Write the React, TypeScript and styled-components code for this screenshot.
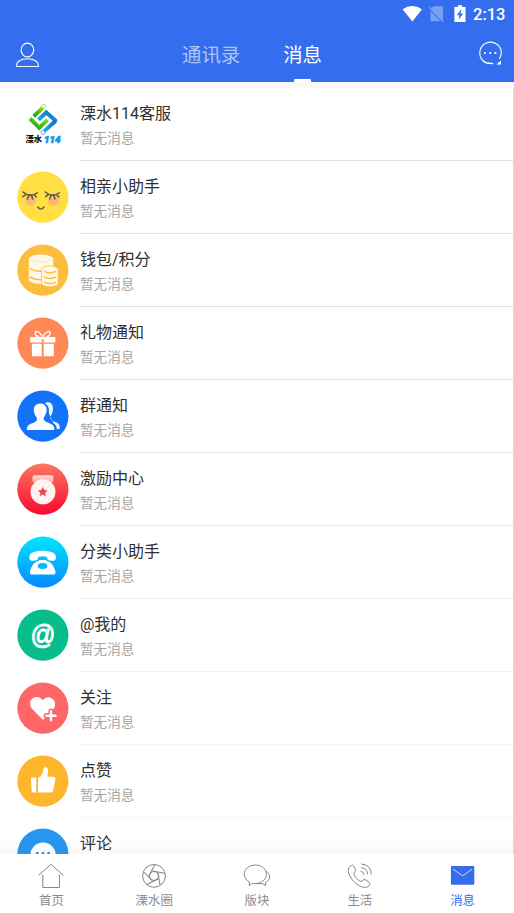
import React from 'react';
import styled, { createGlobalStyle } from 'styled-components';

const GlobalStyle = createGlobalStyle`
  * { box-sizing: border-box; }
  body {
    margin: 0;
    background: #fff;
    font-family: Roboto, "Noto Sans CJK SC", sans-serif;
  }
`;

const Screen = styled.div`
  display: flex;
  flex-direction: column;
  width: 514px;
  height: 913px;
  overflow: hidden;
  background: #fff;
`;

const Header = styled.header`
  flex: none;
  height: 82px;
  background: #346eee;
  color: #fff;
`;

const StatusBar = styled.div`
  display: flex;
  justify-content: flex-end;
  height: 28px;
  padding-right: 9px;
`;

const StatusIcons = styled.svg`
  width: 70px;
  height: 28px;
`;

const Clock = styled.span`
  width: 35px;
  padding-left: 3px;
  font-size: 16.5px;
  font-weight: 500;
  line-height: 29px;
  white-space: nowrap;
`;

const TitleBar = styled.div`
  display: grid;
  grid-template-columns: 168px 1fr 28px;
  height: 54px;
  padding: 0 9px 0 14px;
`;

const HeaderIcon = styled.svg`
  width: 28px;
  height: 54px;
  fill: none;
  stroke: #fff;
  stroke-width: 1.1;
`;

const Tabs = styled.nav`
  display: flex;
  gap: 43px;
`;

const Tab = styled.div<{ $active?: boolean }>`
  display: flex;
  flex-direction: column;
  align-items: center;
  height: 54px;
  font-size: 19.4px;
  line-height: 51px;
  padding-top: 2px;
  color: ${(p) => (p.$active ? '#fff' : 'rgba(255, 255, 255, 0.6)')};

  &::after {
    content: '';
    width: 17px;
    height: 3px;
    margin-top: -2px;
    flex: none;
    border-radius: 1px 1px 0 0;
    background: ${(p) => (p.$active ? '#fff' : 'transparent')};
  }
`;

const Strip = styled.div`
  flex: none;
  height: 6px;
  background: #f8f8f8;
`;

const List = styled.main`
  position: relative;
  flex: 1;
  min-height: 0;
  overflow: hidden;
  border-right: 1px solid #d9d9d9;
`;

const BottomShade = styled.div`
  position: absolute;
  inset: auto 0 0 0;
  height: 18px;
  background: linear-gradient(rgba(0, 0, 0, 0), rgba(0, 0, 0, 0.025));
`;

const Row = styled.div`
  display: flex;
  height: 73.06px;
  padding-left: 17px;
`;

const Avatar = styled.svg`
  flex: none;
  width: 52px;
  height: 52px;
  margin: 10px 11px 0 0;
`;

const RowBody = styled.div<{ $line: string }>`
  flex: 1;
  padding-top: 14px;
  border-bottom: 1px solid ${(p) => p.$line};
`;

const RowTitle = styled.div`
  font-size: 16px;
  line-height: 24px;
  color: #303030;
`;

const RowNote = styled.div`
  margin-top: 2px;
  font-size: 13.6px;
  line-height: 20px;
  color: #a6a6a6;
`;

const BottomNav = styled.nav`
  flex: none;
  display: grid;
  grid-template-columns: repeat(5, 1fr);
  height: 59px;
  background: #fff;
`;

const NavItem = styled.div<{ $active?: boolean }>`
  display: flex;
  flex-direction: column;
  align-items: center;
  padding-top: 8px;
  font-size: 12.4px;
  line-height: 18px;
  color: ${(p) => (p.$active ? '#346eee' : '#8c8c8c')};
`;

const NavIcon = styled.svg`
  width: 28px;
  height: 28px;
  margin-bottom: 2px;
  fill: none;
  stroke: #868686;
  stroke-width: 1;
`;

const Disc = ({ fill }: { fill: string }) => <circle cx="25.9" cy="26.2" r="25.6" fill={fill} />;

const LogoArt = () => (
  <>
    <defs>
      <linearGradient id="leaf" x1="0" y1="1" x2="1" y2="0">
        <stop offset="0" stopColor="#12a51c" />
        <stop offset="1" stopColor="#8ddc12" />
      </linearGradient>
      <linearGradient id="water" x1="0" y1="1" x2="1" y2="0">
        <stop offset="0" stopColor="#12b4f4" />
        <stop offset="1" stopColor="#1467c8" />
      </linearGradient>
    </defs>
    <g fill="none" strokeWidth="3.9">
      <path d="M16.8 18.3 26 9.3" stroke="url(#leaf)" />
      <path d="M13 20.5 22.3 29.7 30.6 21.8" stroke="url(#leaf)" />
      <path d="M21.5 21.8 29.2 14.5 39.5 23.5" stroke="url(#water)" />
      <path d="M38.8 22.8 27 33.4" stroke="url(#water)" />
    </g>
    <circle cx="26.7" cy="8.4" r="2" fill="#fff" stroke="#9cdd45" strokeWidth=".9" />
    <circle cx="26" cy="34.4" r="1.9" fill="#fff" stroke="#27b7f5" strokeWidth=".9" />
    <text x="8.4" y="44.4" fontSize="8.4" fontWeight="900" fill="#111">溧水</text>
    <text x="27" y="44.8" fontSize="9.8" fontWeight="900" fontStyle="italic" fill="#1496e4" stroke="#1496e4" strokeWidth=".7" textLength="16.4" lengthAdjust="spacingAndGlyphs">114</text>
  </>
);

const FaceArt = () => (
  <>
    <Disc fill="#ffdf42" />
    <circle cx="13.4" cy="29.5" r="5.3" fill="#ffb86b" />
    <circle cx="36.6" cy="29.5" r="5.3" fill="#ffb86b" />
    <g fill="none" stroke="#5c5550" strokeWidth="1.5" strokeLinecap="round">
      <path d="M6 21Q12.5 26.8 20.3 21.8M5.8 25.6 8.8 23.6M10.4 28 11.7 24.8M15.6 28 14.8 24.8M19.2 26 17 23.6" />
      <path d="M28.2 21Q34.7 26.8 42.3 21.8M28.7 25.6 31 23.6M32.7 28 33.8 24.8M37.8 28 37 24.8M42 26 39.5 23.6" />
      <path d="M20.8 36Q23.8 40.2 27 36" strokeWidth="1.3" />
    </g>
  </>
);

const CoinsArt = () => (
  <>
    <Disc fill="#fcbc3c" />
    <path d="M11.8 15.5C11.8 8.8 36.2 8.8 36.2 15.5V35C36.2 41.6 11.8 41.6 11.8 35Z" fill="#fff8e8" />
    <g fill="none" stroke="#fcbc3c" strokeWidth="1.5">
      <path d="M13.5 15.8Q24 20.2 34.5 15.8" strokeWidth=".7" opacity=".4" />
      <path d="M12.8 24Q17 27.6 25 27.2M12.8 32.7Q17 36 25 35.8" />
    </g>
    <path d="M24.5 25.7C24.5 20.7 41.2 20.7 41.2 25.7V39C41.2 44 24.5 44 24.5 39Z" fill="#fff8e8" stroke="#fcbc3c" strokeWidth=".8" />
    <path d="M27 27.4Q33 30.4 39 27.4M26.8 32.9Q33 36 39.2 32.9M26.8 38.2Q33 41 39.2 38.2" fill="none" stroke="#fcbc3c" strokeWidth="1.4" />
  </>
);

const GiftArt = () => (
  <>
    <Disc fill="#ff8956" />
    <g fill="none" stroke="#fff" strokeWidth="1.4">
      <path d="M25.6 20C22 13.4 17.4 13.2 18.4 17.2Q19 19.3 22 19.8" />
      <path d="M25.8 20C29.4 13.4 34 13.2 33 17.2Q32.4 19.3 29.4 19.8" />
    </g>
    <path d="M13.2 20H38.3V25.4H13.2ZM14.9 26.7H24.8V39.3H14.9ZM26.7 26.7H36.8V39.3H26.7Z" fill="#fff" />
    <path d="M24.8 22.3H26.7V25.6H24.8Z" fill="#ff8956" />
  </>
);

const GroupArt = () => (
  <>
    <Disc fill="#1372fa" />
    <path d="M27.5 13.5C31 11 35.8 12.7 36 18.2C36.2 21.8 35 24 33.8 26C32.5 29.2 35 30.8 39 32.2C42.3 33.3 43 35.5 42.8 39H39" fill="#fff" opacity=".92" />
    <path d="M23.2 12.5C28.9 12.5 32.2 16 32 20.4C31.9 23.6 30.7 25.4 29.6 27.4C28.6 29.6 30.7 30.5 34 31.9C38.6 33.7 39.9 36 39.9 41H30" fill="#1372fa" />
    <path d="M23.4 13.6C27.6 13.6 29.8 16.6 29.6 20.3C29.5 23.2 28.3 25 27 27.2C25.7 30.4 28.5 31.5 32 33C36.2 34.8 37.5 36.3 37.4 40H10C9.7 36.3 11.3 34.7 15.2 33.2C19 31.7 21 30.5 19.5 27.2C17.8 25 16.9 23 16.8 20.2C16.6 16.6 19 13.6 23.4 13.6Z" fill="#fff" />
  </>
);

const MedalArt = () => (
  <>
    <defs>
      <linearGradient id="medalBg" x1="0" y1="0" x2="0" y2="1">
        <stop offset="0" stopColor="#fd7662" />
        <stop offset="1" stopColor="#fa0830" />
      </linearGradient>
      <linearGradient id="ribbon" x1="0" y1="0" x2="0" y2="1">
        <stop offset="0" stopColor="#ffe2dc" />
        <stop offset="1" stopColor="#ff9f93" />
      </linearGradient>
    </defs>
    <Disc fill="url(#medalBg)" />
    <rect x="15.4" y="12.2" width="21" height="7.5" rx="2" fill="url(#ribbon)" />
    <circle cx="26" cy="28.8" r="12.5" fill="#fff3f1" />
    <path d="M25.8 24.4 27.1 27.3 30.2 27.6 27.9 29.7 28.5 32.8 25.8 31.2 23.1 32.8 23.7 29.7 21.4 27.6 24.5 27.3Z" fill="#e9444c" stroke="#e9444c" strokeWidth=".5" strokeLinejoin="round" />
  </>
);

const PhoneArt = () => (
  <>
    <defs>
      <linearGradient id="phoneBg" x1="0" y1="0" x2="0" y2="1">
        <stop offset="0" stopColor="#00e6ff" />
        <stop offset="1" stopColor="#0788ff" />
      </linearGradient>
    </defs>
    <Disc fill="url(#phoneBg)" />
    <path d="M12.4 22.5C11 16.8 18 14.8 25.6 14.8S40 16.8 38.8 22.5C38.5 24.6 37 24.9 34.5 24.7C30.8 24.4 30.2 23.8 30.2 21.8Q30.2 20.2 25.6 20.2T21 21.8C21 23.8 20.3 24.4 16.8 24.7C14 24.9 12.7 24.6 12.4 22.5Z" fill="#fff" />
    <path d="M20.8 25.2Q22 25 22.3 23.9H29Q29.4 25 30.6 25.2C34 26 37.3 30.5 38.4 35.5C38.8 37.7 38 38.6 36 38.6H15.2C13.2 38.6 12.5 37.7 13 35.5C14 30.5 17.4 26 20.8 25.2Z" fill="#fff" />
    <ellipse cx="25.6" cy="30" rx="4.8" ry="3" fill="#04b5ff" />
  </>
);

const AtArt = () => (
  <>
    <Disc fill="#08bd8c" />
    <text
      textAnchor="middle"
      transform="translate(25.9 34.8) scale(1 1.14)"
      fontFamily="Liberation Sans"
      fontSize="24.5"
      fill="#fff"
      stroke="#fff"
      strokeWidth=".9"
    >
      @
    </text>
  </>
);

const FollowArt = () => (
  <>
    <Disc fill="#ff6668" />
    <path d="M25.7 18.2C29 13.8 34 14.7 36.3 17.5C39 21 38.5 24.5 35.8 28L26 38L16.2 28C12.5 24.3 12.2 20 14.8 17.2C17.8 14 22.7 14.3 25.7 18.2Z" fill="#fff" />
    <path d="M34 29V38.4M29.2 33.7H38.8" stroke="#ff6668" strokeWidth="5.2" strokeLinecap="round" />
    <path d="M34 29.2V38.3M29.5 33.7H38.5" stroke="#fff" strokeWidth="2.4" strokeLinecap="round" />
  </>
);

const LikeArt = () => (
  <>
    <Disc fill="#ffb62f" />
    <path d="M14 23.3Q14 22.5 14.8 22.5H19.2V37.4H15.4Q14.8 37.4 14.7 36.7ZM21 23C24.3 21.5 26 18.5 26.3 14.5C26.5 11.5 30.7 11.3 31 15.5Q31.2 18.5 30.2 21.7H36.3C38.1 21.7 38.6 23 38.3 24.8L36.3 35.2C36 36.8 35 37.4 33.5 37.4H21Z" fill="#fff" />
  </>
);

const CommentArt = () => (
  <>
    <Disc fill="#2896ee" />
    <circle cx="26" cy="27.3" r="12.8" fill="#fff" />
    <g fill="#2896ee">
      <circle cx="20.3" cy="25.2" r="1.5" />
      <circle cx="26" cy="25.2" r="1.5" />
      <circle cx="31.7" cy="25.2" r="1.5" />
    </g>
  </>
);

const rows = [
  { title: '溧水114客服', Art: LogoArt, line: '#dfdfdf' },
  { title: '相亲小助手', Art: FaceArt, line: '#e0e0e0' },
  { title: '钱包/积分', Art: CoinsArt, line: '#e2e2e2' },
  { title: '礼物通知', Art: GiftArt, line: '#e4e4e4' },
  { title: '群通知', Art: GroupArt, line: '#e7e7e7' },
  { title: '激励中心', Art: MedalArt, line: '#ebebeb' },
  { title: '分类小助手', Art: PhoneArt, line: '#eeeeee' },
  { title: '@我的', Art: AtArt, line: '#f1f1f1' },
  { title: '关注', Art: FollowArt, line: '#f4f4f4' },
  { title: '点赞', Art: LikeArt, line: '#f7f7f7' },
];

const bladeAngles = [10, 82, 154, 226, 298];

const navItems = [
  {
    label: '首页',
    icon: <path d="M1.4 13.4 14 2.4 26.6 13.4M5.8 12.5V25.5H22.4V12.5" />,
  },
  {
    label: '溧水圈',
    icon: (
      <>
        <circle cx="14" cy="13.9" r="11.4" />
        <circle cx="14" cy="13.9" r="4.4" />
        {bladeAngles.map((a) => (
          <path key={a} d="M11.5 9.3H24.2" transform={`rotate(${a} 14 13.9)`} />
        ))}
      </>
    ),
  },
  {
    label: '版块',
    icon: (
      <>
        <path d="M12.3 3C18.5 3 23.4 7 23.4 12.2S18.5 21.5 12.3 21.5Q10.7 21.5 9.4 21.2L6.2 23.6 6.5 20C3.3 18.4 1.3 15.6 1.3 12.2C1.3 7 6.2 3 12.3 3Z" />
        <path d="M22.8 9.2C28.4 12 27.7 18 22.6 20.5V23.7L19 21.5Q15.5 21.9 12.5 21.5" />
      </>
    ),
  },
  {
    label: '生活',
    icon: (
      <>
        <path d="M5.4 3.5C2.2 5 1.3 8.4 3.3 12.8C6.1 18.8 11.5 24 17.6 25.3C20.4 25.8 22.6 24.8 23.8 22.4Q24.4 21 23.2 20.3L19 17.6Q17.9 17 17 18.3Q15.7 20 14 19.1C11.5 17.7 9.2 15.2 8.1 12.6C7.6 11.2 8 10.4 9.2 9.6Q10.3 8.9 9.6 7.6L7.5 3.8Q6.8 2.8 5.4 3.5Z" />
        <path d="M14.6 9.4Q17.8 9.5 17.9 12.8M15.2 5.8Q21.3 6.2 21.6 12.3M15.3 2Q24.8 2.6 25.4 12.2" />
      </>
    ),
  },
  {
    label: '消息',
    active: true,
    icon: (
      <>
        <rect x="1.9" y="4" width="23.4" height="18.8" rx="1" fill="#346eee" stroke="none" />
        <path d="M4.1 7.2 13.6 13.9 23.1 7.2" stroke="#dce7ff" strokeWidth=".9" />
      </>
    ),
  },
];

const PartialRow = styled(Row)`
  height: 35px;
`;

export default function App() {
  return (
    <Screen>
      <GlobalStyle />
      <Header>
        <StatusBar>
          <StatusIcons viewBox="0 0 70 28">
            <path d="M2.6 9.2Q12.3 2.6 22 9.2L12.3 21.6Z" fill="#fff" />
            <path d="M33.5 6.3H43V20.6L31.2 8.5ZM30.5 11 40.5 21.3H30.5Z" fill="#fff" opacity=".35" />
            <path d="M29 7.2 43.3 21.8" stroke="#fff" strokeOpacity=".4" strokeWidth="1.2" />
            <path d="M57.8 5.2H62.2V7H65.5V22H54.4V7H57.8Z" fill="#fff" />
            <path d="M61.3 9 56.9 15.2H59.4L58.8 19.7 63.1 13.5H60.6Z" fill="#346eee" />
          </StatusIcons>
          <Clock>2:13</Clock>
        </StatusBar>
        <TitleBar>
          <HeaderIcon viewBox="0 0 28 54">
            <ellipse cx="13.4" cy="22" rx="6.3" ry="6.9" />
            <path d="M2.6 38.5C2.2 33.5 7 30.7 13.4 30.7S24.7 33.5 24.4 38.5Z" />
          </HeaderIcon>
          <Tabs>
            <Tab>通讯录</Tab>
            <Tab $active>消息</Tab>
          </Tabs>
          <HeaderIcon viewBox="0 0 28 54">
            <path d="M15 35.4Q9.6 36.2 5.8 32.5C.4 27 2.6 17.6 9.4 15C16.5 12.3 24.3 17 24.3 24.7Q24.2 28.2 22.2 31M11 34.8 15.7 35.6 15.2 36.4" />
            <path d="M24 32.5V36.4H19.4Z" fill="#fff" stroke="none" />
            <g fill="#fff" stroke="none">
              <circle cx="8" cy="25" r="1.1" />
              <circle cx="13.2" cy="25" r="1.1" />
              <circle cx="18.4" cy="25" r="1.1" />
            </g>
          </HeaderIcon>
        </TitleBar>
      </Header>
      <Strip />
      <List>
        {rows.map(({ title, Art, line }) => (
          <Row key={title}>
            <Avatar viewBox="0 0 52 52">
              <Art />
            </Avatar>
            <RowBody $line={line}>
              <RowTitle>{title}</RowTitle>
              <RowNote>暂无消息</RowNote>
            </RowBody>
          </Row>
        ))}
        <PartialRow>
          <Avatar viewBox="0 0 52 52">
            <CommentArt />
          </Avatar>
          <RowBody $line="transparent">
            <RowTitle>评论</RowTitle>
          </RowBody>
        </PartialRow>
        <BottomShade />
      </List>
      <BottomNav>
        {navItems.map(({ label, icon, active }) => (
          <NavItem key={label} $active={active}>
            <NavIcon viewBox="0 0 28 28">{icon}</NavIcon>
            {label}
          </NavItem>
        ))}
      </BottomNav>
    </Screen>
  );
}
